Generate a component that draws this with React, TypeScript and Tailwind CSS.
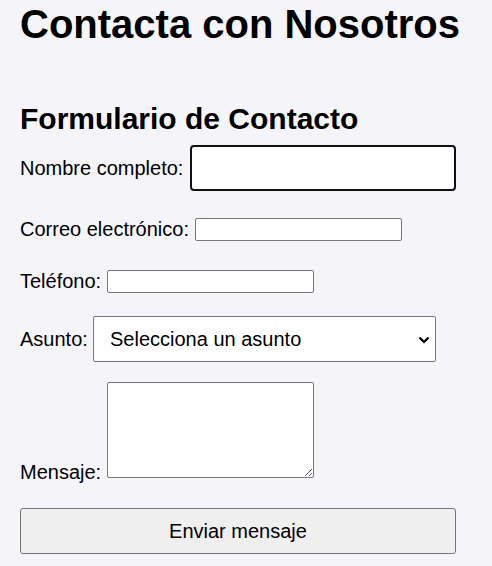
export default function App() {
  return (
    <div className="min-h-[566px] bg-[#f4f4f9] px-[20px] text-black font-['Liberation_Sans',Arial,sans-serif]">
      <div className="w-[436px] flex flex-col">
        <h1 className="mt-[1px] text-[40px] leading-[46px] font-bold whitespace-nowrap">Contacta con Nosotros</h1>
        <h2 className="mt-[55px] text-[30px] leading-[34px] font-bold whitespace-nowrap">Formulario de Contacto</h2>
        <form className="flex flex-col text-[20px] leading-[23px]" onSubmit={(e) => e.preventDefault()}>
          <div className="mt-[9px] flex items-center">
            <label htmlFor="nombre" className="w-[170px] shrink-0 whitespace-nowrap">Nombre completo:</label>
            <input id="nombre" type="text" className="w-[266px] h-[46px] border-2 border-[#101010] rounded-[4px] bg-white outline-none" />
          </div>
          <div className="mt-[27px] flex items-center">
            <label htmlFor="correo" className="w-[175px] shrink-0 whitespace-nowrap">Correo electrónico:</label>
            <input id="correo" type="email" className="w-[207px] h-[23px] border border-[#767676] rounded-[2px] bg-white" />
          </div>
          <div className="mt-[29px] flex items-center">
            <label htmlFor="telefono" className="w-[87px] shrink-0 whitespace-nowrap">Teléfono:</label>
            <input id="telefono" type="tel" className="w-[207px] h-[23px] border border-[#767676] rounded-[2px] bg-white" />
          </div>
          <div className="mt-[23px] flex items-center">
            <label htmlFor="asunto" className="w-[73px] shrink-0 whitespace-nowrap">Asunto:</label>
            <div className="relative w-[343px] h-[46px]">
              <select id="asunto" defaultValue="" className="appearance-none w-full h-full border border-[#767676] rounded-[2px] bg-white pl-[16px] text-[20px] text-black">
                <option value="">Selecciona un asunto</option>
                <option value="info">Información</option>
                <option value="soporte">Soporte</option>
              </select>
              <svg className="pointer-events-none absolute right-[6px] top-[20px]" width="12" height="8" viewBox="0 0 12 8">
                <path d="M1.5 1.5 L6 6 L10.5 1.5" fill="none" stroke="#000" strokeWidth="2.2" />
              </svg>
            </div>
          </div>
          <div className="mt-[20px] flex items-end">
            <label htmlFor="mensaje" className="w-[87px] shrink-0 -mb-[6px] whitespace-nowrap">Mensaje:</label>
            <textarea id="mensaje" className="w-[207px] h-[96px] border border-[#767676] rounded-[2px] bg-white block" />
          </div>
          <button type="submit" className="mt-[30px] w-[436px] h-[46px] border border-[#767676] rounded-[3px] bg-[#efefef] text-[20px] text-black">
            Enviar mensaje
          </button>
        </form>
      </div>
    </div>
  );
}
